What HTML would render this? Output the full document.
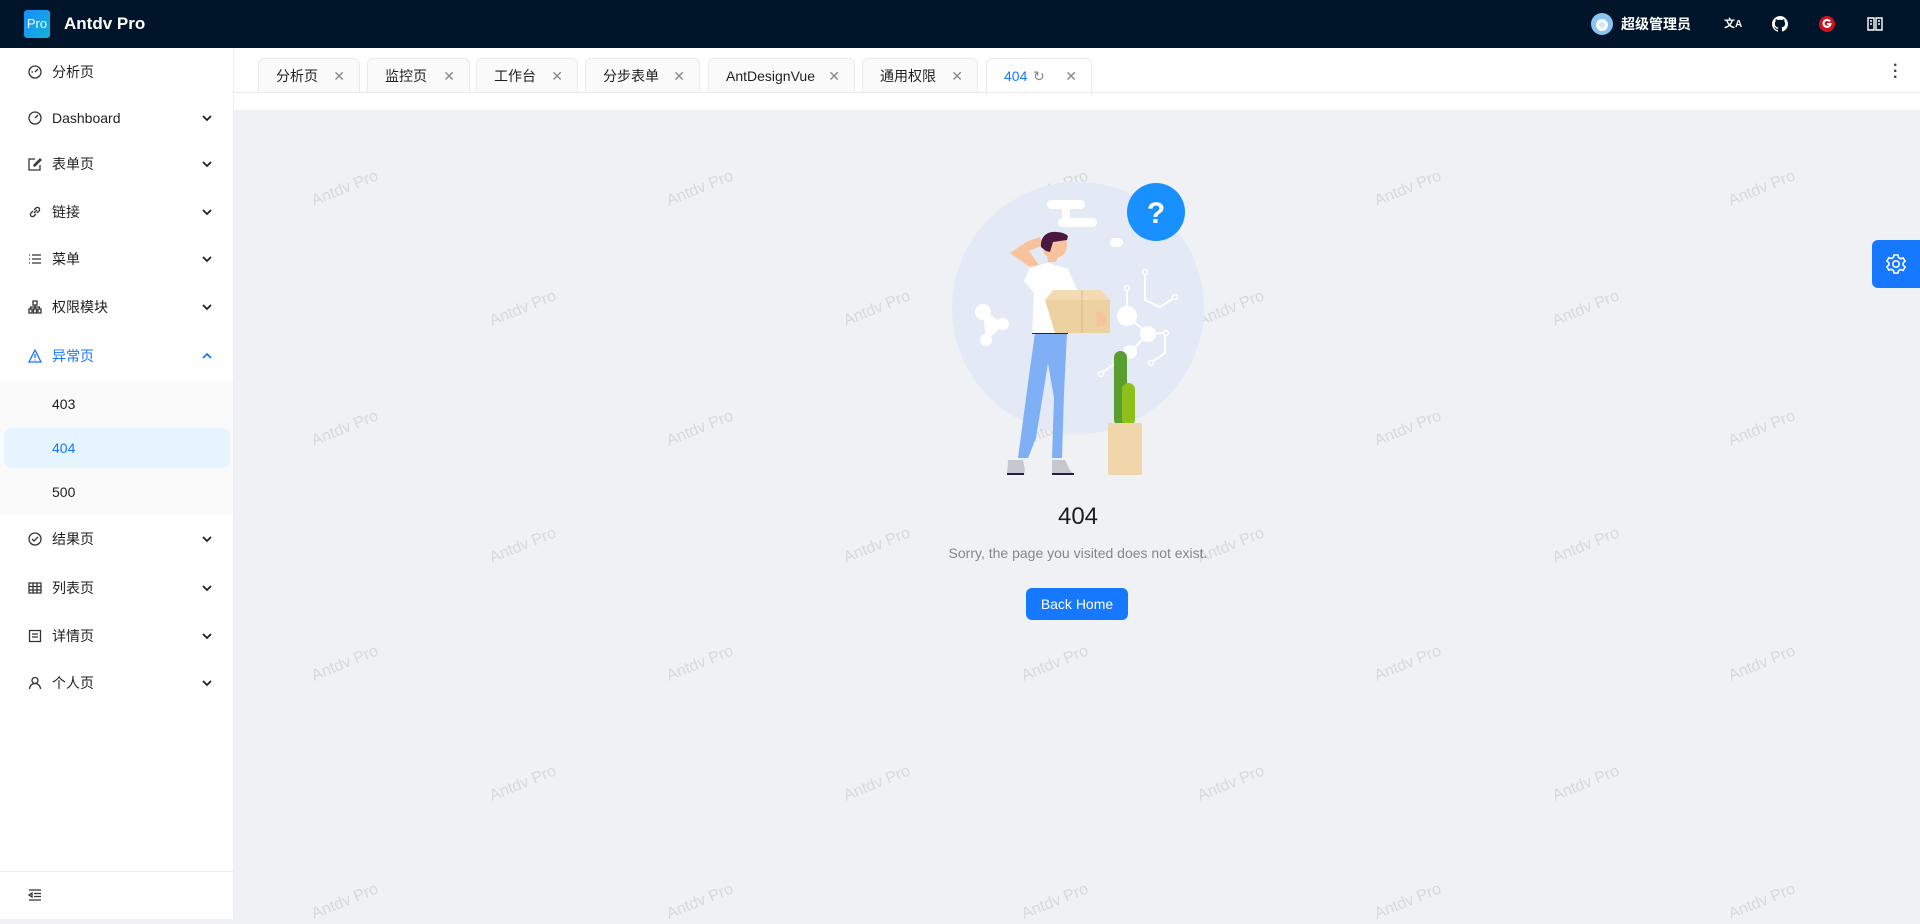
<!DOCTYPE html>
<html><head><meta charset="utf-8"><style>
*{margin:0;padding:0;box-sizing:border-box}
body{width:1920px;height:919px;overflow:hidden;font-family:"Liberation Sans","Noto Sans CJK SC",sans-serif;font-size:14px;color:rgba(0,0,0,.88);background:#f0f1f5;position:relative}
.hdr{position:absolute;left:0;top:0;width:1920px;height:48px;background:#001529;color:#fff}
.logo{position:absolute;left:24px;top:10px;width:26px;height:28px;border-radius:3px;background:linear-gradient(135deg,#1a8cff,#12b3d6);font-size:13px;color:#fff;text-align:center;line-height:28px}
.brand{position:absolute;left:64px;top:14px;font-size:17px;font-weight:bold}
.side{position:absolute;left:0;top:48px;width:234px;height:871px;background:#fff;border-right:1px solid #eee}
.mi{position:absolute;left:0;width:234px;height:40px;line-height:40px;padding-left:52px}
.mi svg.ic{position:absolute;left:28px;top:13px}
.mi .ch{position:absolute;left:201px;top:15px}
.tabs{position:absolute;left:234px;top:48px;width:1686px;height:62px;background:#fff}
.tab{position:absolute;top:10px;height:35px;line-height:34px;background:#fafafa;border:1px solid #eaeaea;border-bottom:none;border-radius:6px 6px 0 0;padding-left:17px;font-size:14px}
.tab .x{position:absolute;right:14px;top:0;color:#888;font-size:14px}
.wm{position:absolute;color:rgba(0,0,0,.1);font-size:16px;transform:rotate(-22deg);white-space:nowrap}
</style></head><body>
<div class="hdr">
<div class="logo">Pro</div><div class="brand">Antdv Pro</div>
<svg style="position:absolute;left:1591px;top:13px" width="22" height="22"><circle cx="11" cy="11" r="11" fill="#8ac4f0"/><circle cx="11" cy="12" r="6" fill="#fff"/><circle cx="11" cy="12" r="3" fill="#8ac4f0" opacity=".4"/></svg>
<div style="position:absolute;left:1621px;top:14px;font-size:14px;font-weight:bold">超级管理员</div>
<div style="position:absolute;left:1724px;top:15px;font-size:11px;font-weight:bold">文<span style="font-size:10px">A</span></div>
<svg style="position:absolute;left:1772px;top:16px" width="16" height="16" viewBox="0 0 16 16"><path fill="#fff" d="M8 0C3.6 0 0 3.6 0 8c0 3.5 2.3 6.5 5.5 7.6.4.1.5-.2.5-.4v-1.4c-2.2.5-2.7-1-2.7-1-.4-.9-.9-1.200-.9-1.2-.7-.5.1-.5.1-.5.8.1 1.2.8 1.2.8.7 1.2 1.9.9 2.3.7.1-.5.3-.9.5-1.1-1.8-.2-3.6-.9-3.600-4 0-.9.3-1.6.8-2.1-.1-.2-.4-1 .1-2.1 0 0 .7-.2 2.2.8.6-.2 1.3-.3 2-.3s1.4.1 2 .3c1.5-1 2.2-.8 2.2-.8.4 1.1.2 1.9.1 2.1.5.6.8 1.3.8 2.1 0 3.1-1.9 3.7-3.6 3.9.3.3.5.8.5 1.5v2.2c0 .2.1.5.6.4C13.7 14.5 16 11.5 16 8c0-4.4-3.6-8-8-8z"/></svg>
<svg style="position:absolute;left:1819px;top:16px" width="16" height="16"><circle cx="8" cy="8" r="8" fill="#c7161f"/><path d="M11 5.5A3.5 3.5 0 1 0 11.5 8H8" stroke="#fff" stroke-width="2" fill="none"/></svg>
<svg style="position:absolute;left:1867px;top:17px" width="16" height="14"><path d="M1 1h6v12H1zM9 1h6v12H9zM3 4h2M3 7h2M11 4h2M11 7h2" stroke="#fff" stroke-width="1.4" fill="none"/></svg>
</div>

<div class="side">
<div class="mi" style="top:4px"><svg class="ic" width="14" height="14"><circle cx="7" cy="7" r="6" stroke="#333" stroke-width="1.3" fill="none"/><path d="M7 7l3-3M3.5 7h1.5" stroke="#333" stroke-width="1.3"/></svg>分析页</div>
<div class="mi" style="top:50px"><svg class="ic" width="14" height="14"><circle cx="7" cy="7" r="6" stroke="#333" stroke-width="1.3" fill="none"/><path d="M7 7l3-3" stroke="#333" stroke-width="1.3"/></svg>Dashboard<svg class="ch" width="12" height="10"><path d="M2 3l4 4 4-4" stroke="#222" stroke-width="1.8" fill="none"/></svg></div>
<div class="mi" style="top:96px"><svg class="ic" width="14" height="14"><path d="M12 8v5H1V2h6M6 8l6-6 1 1-6 6H6z" stroke="#333" stroke-width="1.3" fill="none"/></svg>表单页<svg class="ch" width="12" height="10"><path d="M2 3l4 4 4-4" stroke="#222" stroke-width="1.8" fill="none"/></svg></div>
<div class="mi" style="top:144px"><svg class="ic" width="14" height="14"><path d="M6 8l3-3M5 6L3 8a2 2 0 0 0 3 3l2-2M9 8l2-2a2 2 0 0 0-3-3L6 5" stroke="#333" stroke-width="1.3" fill="none"/></svg>链接<svg class="ch" width="12" height="10"><path d="M2 3l4 4 4-4" stroke="#222" stroke-width="1.8" fill="none"/></svg></div>
<div class="mi" style="top:191px"><svg class="ic" width="14" height="14"><path d="M1 3h1M1 7h1M1 11h1M4 3h9M4 7h9M4 11h9" stroke="#333" stroke-width="1.3"/></svg>菜单<svg class="ch" width="12" height="10"><path d="M2 3l4 4 4-4" stroke="#222" stroke-width="1.8" fill="none"/></svg></div>
<div class="mi" style="top:239px"><svg class="ic" width="14" height="14"><path d="M5 1h4v4H5zM1 9h3v4H1zM5.5 9h3v4h-3zM10 9h3v4h-3zM2.5 9V7h9v2M7 5v4" stroke="#333" stroke-width="1.3" fill="none"/></svg>权限模块<svg class="ch" width="12" height="10"><path d="M2 3l4 4 4-4" stroke="#222" stroke-width="1.8" fill="none"/></svg></div>
<div class="mi" style="top:288px;color:#1677ff"><svg class="ic" width="14" height="14"><path d="M7 1L13 13H1z M7 5v4M7 10.5v1" stroke="#1677ff" stroke-width="1.3" fill="none"/></svg>异常页<svg class="ch" width="12" height="10"><path d="M2 7l4-4 4 4" stroke="#1677ff" stroke-width="1.8" fill="none"/></svg></div>
<div style="position:absolute;top:332px;left:0;width:233px;height:135px;background:#fafafa"></div>
<div class="mi" style="top:336px">403</div>
<div style="position:absolute;top:380px;left:4px;width:226px;height:40px;border-radius:8px;background:#e6f4ff"></div>
<div class="mi" style="top:380px;color:#1677ff">404</div>
<div class="mi" style="top:424px">500</div>
<div class="mi" style="top:471px"><svg class="ic" width="14" height="14"><circle cx="7" cy="7" r="6" stroke="#333" stroke-width="1.3" fill="none"/><path d="M4 7l2 2 4-4" stroke="#333" stroke-width="1.3" fill="none"/></svg>结果页<svg class="ch" width="12" height="10"><path d="M2 3l4 4 4-4" stroke="#222" stroke-width="1.8" fill="none"/></svg></div>
<div class="mi" style="top:520px"><svg class="ic" width="14" height="14"><path d="M1 2h12v10H1zM1 5.5h12M1 9h12M5 2v10M9 2v10" stroke="#333" stroke-width="1.3" fill="none"/></svg>列表页<svg class="ch" width="12" height="10"><path d="M2 3l4 4 4-4" stroke="#222" stroke-width="1.8" fill="none"/></svg></div>
<div class="mi" style="top:568px"><svg class="ic" width="14" height="14"><path d="M1.5 1.5h11v11h-11zM4 5h6M4 8h6" stroke="#333" stroke-width="1.3" fill="none"/></svg>详情页<svg class="ch" width="12" height="10"><path d="M2 3l4 4 4-4" stroke="#222" stroke-width="1.8" fill="none"/></svg></div>
<div class="mi" style="top:615px"><svg class="ic" width="14" height="14"><circle cx="7" cy="4.5" r="3" stroke="#333" stroke-width="1.3" fill="none"/><path d="M1.5 13a5.5 5.5 0 0 1 11 0" stroke="#333" stroke-width="1.3" fill="none"/></svg>个人页<svg class="ch" width="12" height="10"><path d="M2 3l4 4 4-4" stroke="#222" stroke-width="1.8" fill="none"/></svg></div>
<div style="position:absolute;top:823px;left:0;width:233px;border-top:1px solid #eee"></div>
<svg style="position:absolute;left:28px;top:841px" width="14" height="12"><path d="M1 1h12M6 4.5h7M6 7.5h7M1 11h12M4 4L1 6l3 2z" stroke="#333" stroke-width="1.3" fill="none"/></svg>
</div>

<div class="tabs">
<div class="tab" style="left:24px;width:102px">分析页<span class="x">✕</span></div>
<div class="tab" style="left:133px;width:103px">监控页<span class="x">✕</span></div>
<div class="tab" style="left:242px;width:102px">工作台<span class="x">✕</span></div>
<div class="tab" style="left:351px;width:115px">分步表单<span class="x">✕</span></div>
<div class="tab" style="left:474px;width:147px">AntDesignVue<span class="x">✕</span></div>
<div class="tab" style="left:628px;width:116px">通用权限<span class="x">✕</span></div>
<div class="tab" style="left:752px;width:106px;background:#fff;color:#1677ff;height:36px">404<span style="position:absolute;left:46px;color:#888">↻</span><span class="x">✕</span></div>
<div style="position:absolute;left:0;top:44px;width:1686px;border-top:1px solid #eaeaea"></div>
<div style="position:absolute;left:1659px;top:15px;font-size:16px;line-height:6px;color:#444;font-weight:bold">·<br>·<br>·</div>
</div>

<div class="wm" style="left:310px;top:180px">Antdv Pro</div><div class="wm" style="left:665px;top:180px">Antdv Pro</div><div class="wm" style="left:1020px;top:180px">Antdv Pro</div><div class="wm" style="left:1373px;top:180px">Antdv Pro</div><div class="wm" style="left:1727px;top:180px">Antdv Pro</div>
<div class="wm" style="left:488px;top:300px">Antdv Pro</div><div class="wm" style="left:842px;top:300px">Antdv Pro</div><div class="wm" style="left:1196px;top:300px">Antdv Pro</div><div class="wm" style="left:1551px;top:300px">Antdv Pro</div>
<div class="wm" style="left:310px;top:420px">Antdv Pro</div><div class="wm" style="left:665px;top:420px">Antdv Pro</div><div class="wm" style="left:1020px;top:420px">Antdv Pro</div><div class="wm" style="left:1373px;top:420px">Antdv Pro</div><div class="wm" style="left:1727px;top:420px">Antdv Pro</div>
<div class="wm" style="left:488px;top:537px">Antdv Pro</div><div class="wm" style="left:842px;top:537px">Antdv Pro</div><div class="wm" style="left:1196px;top:537px">Antdv Pro</div><div class="wm" style="left:1551px;top:537px">Antdv Pro</div>
<div class="wm" style="left:310px;top:655px">Antdv Pro</div><div class="wm" style="left:665px;top:655px">Antdv Pro</div><div class="wm" style="left:1020px;top:655px">Antdv Pro</div><div class="wm" style="left:1373px;top:655px">Antdv Pro</div><div class="wm" style="left:1727px;top:655px">Antdv Pro</div>
<div class="wm" style="left:488px;top:775px">Antdv Pro</div><div class="wm" style="left:842px;top:775px">Antdv Pro</div><div class="wm" style="left:1196px;top:775px">Antdv Pro</div><div class="wm" style="left:1551px;top:775px">Antdv Pro</div>
<div class="wm" style="left:310px;top:893px">Antdv Pro</div><div class="wm" style="left:665px;top:893px">Antdv Pro</div><div class="wm" style="left:1020px;top:893px">Antdv Pro</div><div class="wm" style="left:1373px;top:893px">Antdv Pro</div><div class="wm" style="left:1727px;top:893px">Antdv Pro</div>

<svg style="position:absolute;left:0;top:0" width="1920" height="919">
<circle cx="1078" cy="308" r="126" fill="#e3eaf6"/>
<circle cx="1156" cy="212" r="29" fill="#1890ff"/>
<text x="1156" y="223" font-family="Liberation Sans" font-weight="bold" font-size="30" fill="#fff" text-anchor="middle">?</text>
<rect x="1047" y="200" width="38" height="9" rx="4.5" fill="#fff"/>
<rect x="1058" y="218" width="39" height="9" rx="4.5" fill="#fff"/>
<rect x="1062" y="205" width="8" height="15" fill="#fff"/>
<rect x="1110" y="238" width="13" height="9" rx="4.5" fill="#fff"/>
<g stroke="#fff" stroke-width="2" fill="#fff">
<path d="M983 312L1003 324L986 340"/><circle cx="983" cy="312" r="7"/><circle cx="1003" cy="324" r="5"/><circle cx="986" cy="340" r="5"/>
<path d="M1127 316L1148 334L1130 352M1127 316V290M1145 272V300L1160 307L1174 298M1148 334L1165 333V353L1152 362M1130 352L1110 367L1102 373" fill="none"/>
<circle cx="1127" cy="316" r="9"/><circle cx="1148" cy="334" r="7"/><circle cx="1130" cy="352" r="6"/>
</g>
<g fill="#e3eaf6" stroke="#fff" stroke-width="1.5"><circle cx="1127" cy="288" r="2.5"/><circle cx="1145" cy="272" r="2.5"/><circle cx="1175" cy="297" r="2.5"/><circle cx="1166" cy="333" r="2.5"/><circle cx="1151" cy="363" r="2.5"/><circle cx="1101" cy="374" r="2.5"/></g>
<rect x="1114" y="351" width="13" height="75" rx="6.5" fill="#5a9e2f"/>
<rect x="1122" y="383" width="13" height="43" rx="6.5" fill="#8fbf1a"/>
<rect x="1108" y="423" width="34" height="52" rx="2" fill="#f0d6aa"/>
<path d="M1035 333h32l-3 60-2 65h-10l2-60-6-35-12 75-8 20h-10l6-45 6-45z" fill="#7fb0f5"/>
<rect x="1032" y="330" width="36" height="4" fill="#1b1f5a"/>
<path d="M1008 460h15l2 10-1 4h-17z M1052 460h13l5 10 4 5h-22z" fill="#c4c8ce"/>
<path d="M1007 474h17M1052 474h22" stroke="#2a1a3e" stroke-width="2"/>
<path d="M1030 267l18-4 20 6 14 32-14 32h-36l2-40-10-12z" fill="#fff"/>
<path d="M1030 267l-20-14 18-12 12-4 3 8-14 6 10 14z" fill="#f8c39c"/>
<path d="M1043 247c0-10 6-15 13-15 8 0 11 6 11 12 0 8-4 13-9 13l-2 5h-8l-1-6c-3-1-4-5-4-9z" fill="#f8c39c"/>
<path d="M1041 247c-1-10 6-16 15-15 6 0 10 2 12 4l-1 4-14 2-3 10-4-1z" fill="#4a1942"/>
<path d="M1045 300h65v33h-55z" fill="#eed1a0"/>
<path d="M1045 300l8-10h48l9 10z" fill="#f3dcb4"/>
<path d="M1082 290v43" stroke="#d9b987" stroke-width="1"/>
<path d="M1096 311c6 0 10 3 10 8s-3 8-9 8z" fill="#f8c39c"/>
</svg>

<div style="position:absolute;left:980px;top:503px;width:196px;text-align:center;font-size:24px;color:rgba(0,0,0,.88)">404</div>
<div style="position:absolute;left:880px;top:545px;width:396px;text-align:center;font-size:14px;color:rgba(0,0,0,.45)">Sorry, the page you visited does not exist.</div>
<div style="position:absolute;left:1026px;top:588px;width:102px;height:32px;border-radius:6px;background:#1677ff;color:#fff;text-align:center;line-height:32px;font-size:14px">Back Home</div>

<div style="position:absolute;left:1872px;top:240px;width:48px;height:48px;background:#1677ff;border-radius:6px 0 0 6px"></div>
<svg style="position:absolute;left:1885px;top:253px" width="22" height="22" viewBox="0 0 22 22"><path d="M9 2h4l.6 2.6 2 1.1 2.5-.9 2 3.4-2 1.8v2.2l2 1.8-2 3.4-2.5-.9-2 1.1L13 20H9l-.6-2.6-2-1.1-2.5.9-2-3.4 2-1.8V9.8l-2-1.8 2-3.4 2.5.9 2-1.1z" stroke="#fff" stroke-width="1.6" fill="none"/><circle cx="11" cy="11" r="3.2" stroke="#fff" stroke-width="1.6" fill="none"/></svg>
</body></html>
